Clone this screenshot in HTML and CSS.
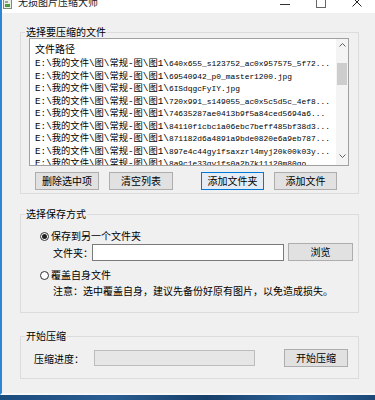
FILE: index.html
```html
<!DOCTYPE html>
<html lang="zh-CN">
<head>
  <meta charset="UTF-8">
  <title>无损图片压缩大师</title>
  <link rel="stylesheet" href="styles.css">
</head>
<body>

  <div class="window">
    <div class="titlebar">
      <svg class="app-icon" width="9" height="10" viewBox="0 0 9 10">
        <rect x="0.5" y="0.5" width="8" height="9" fill="#e8efe6" stroke="#7f8c7a"/>
        <rect x="2" y="5" width="5" height="3" fill="#4f9a3e"/>
        <rect x="2" y="2" width="3" height="2" fill="#9aa596"/>
      </svg>
      <span class="title">无损图片压缩大师</span>
      <div class="caption-btns">
        <span class="cap"><span class="cap-min"></span></span>
        <span class="cap"><span class="cap-max"></span></span>
        <span class="cap">
          <svg class="cap-close" width="10" height="10" viewBox="0 0 10 10">
            <path d="M0.5 0.5 L9.5 9.5 M9.5 0.5 L0.5 9.5" stroke="#222" stroke-width="1"/>
          </svg>
        </span>
      </div>
    </div>

    <div class="content">
      <fieldset class="group group-files">
        <legend>选择要压缩的文件</legend>
        <div class="listbox">
          <div class="list">
            <div class="list-head">文件路径</div>
            <div class="row"><span class="dir">E:\我的文件\图\常规-图\图1\</span><span class="name">640x655_s123752_ac0x957575_5f72...</span></div>
            <div class="row"><span class="dir">E:\我的文件\图\常规-图\图1\</span><span class="name">69540942_p0_master1200.jpg</span></div>
            <div class="row"><span class="dir">E:\我的文件\图\常规-图\图1\</span><span class="name">6ISdqgcFyIY.jpg</span></div>
            <div class="row"><span class="dir">E:\我的文件\图\常规-图\图1\</span><span class="name">720x991_s149055_ac0x5c5d5c_4ef8...</span></div>
            <div class="row"><span class="dir">E:\我的文件\图\常规-图\图1\</span><span class="name">74635287ae0413b9f5a84ced5694a6...</span></div>
            <div class="row"><span class="dir">E:\我的文件\图\常规-图\图1\</span><span class="name">84110f1cbc1a06ebc7beff485bf38d3...</span></div>
            <div class="row"><span class="dir">E:\我的文件\图\常规-图\图1\</span><span class="name">871182d6a4891a9bde0820e6a9eb787...</span></div>
            <div class="row"><span class="dir">E:\我的文件\图\常规-图\图1\</span><span class="name">897e4c44gy1fsaxzrl4myj20k00k03y...</span></div>
            <div class="row"><span class="dir">E:\我的文件\图\常规-图\图1\</span><span class="name">8a9c1e33gy1fs0a2b7k11j20m80go...</span></div>
          </div>
          <div class="scrollbar">
            <span class="arrow">
              <svg width="7" height="4" viewBox="0 0 7 4"><path d="M0.5 3.5 L3.5 0.5 L6.5 3.5" fill="none" stroke="#606060"/></svg>
            </span>
            <div class="track"><div class="thumb"></div></div>
            <span class="arrow arrow-down">
              <svg width="7" height="4" viewBox="0 0 7 4"><path d="M0.5 0.5 L3.5 3.5 L6.5 0.5" fill="none" stroke="#606060"/></svg>
            </span>
          </div>
        </div>
        <div class="btn-row">
          <button type="button" class="btn btn-del">删除选中项</button>
          <button type="button" class="btn btn-clear">清空列表</button>
          <button type="button" class="btn btn-folder focused">添加文件夹</button>
          <button type="button" class="btn btn-file">添加文件</button>
        </div>
      </fieldset>

      <fieldset class="group group-save">
        <legend>选择保存方式</legend>
        <div class="radio-row">
          <span class="radio checked"></span>
          <span>保存到另一个文件夹</span>
        </div>
        <div class="folder-row">
          <span class="folder-label">文件夹：</span>
          <input type="text" class="folder-input">
          <button type="button" class="btn btn-browse">浏览</button>
        </div>
        <div class="radio-row radio-row-2">
          <span class="radio"></span>
          <span>覆盖自身文件</span>
        </div>
        <div class="note">注意：选中覆盖自身，建议先备份好原有图片，以免造成损失。</div>
      </fieldset>

      <fieldset class="group group-start">
        <legend>开始压缩</legend>
        <div class="progress-row">
          <span class="progress-label">压缩进度：</span>
          <div class="progress"></div>
          <button type="button" class="btn btn-start">开始压缩</button>
        </div>
      </fieldset>
    </div>
  </div>
  <div class="desktop"></div>

</body>
</html>
```

FILE: styles.css
```css
body {
  margin: 0;
  font-family: "Noto Sans CJK SC", "Liberation Sans", sans-serif;
  font-size: 10px;
  color: #000;
  background: #1d4a78;
  overflow: hidden;
}

.window {
  height: 393px;
  background: #f0f0f0;
  border-left: 2px solid #2b86d6;
  border-bottom: 2px solid #f8f8f8;
  overflow: hidden;
}

/* title bar, cut at the top */
.titlebar {
  height: 13px;
  background: #fff;
  display: flex;
  align-items: flex-start;
  overflow: hidden;
}

.app-icon {
  margin: -1px 0 0 1px;
}

.title {
  margin: -4px 0 0 6px;
  font-size: 10px;
  line-height: 12px;
  color: #222;
}

.caption-btns {
  margin-left: auto;
  display: flex;
}

.cap {
  width: 36px;
  height: 13px;
  display: flex;
  justify-content: center;
  align-items: flex-start;
}

.cap-min {
  width: 10px;
  height: 1px;
  margin-top: 4px;
  background: #333;
}

.cap-max {
  width: 8px;
  height: 8px;
  margin-top: -2px;
  border: 1px solid #666;
}

.cap-close {
  margin-top: -3px;
}

/* group boxes */
.content {
  padding: 13px 0 0 18px;
}

.group {
  margin: 0;
  width: 339px;
  min-width: 0;
  box-sizing: border-box;
  border: 1px solid #dcdcdc;
}

.group legend {
  padding: 0 1px;
  line-height: 12px;
}

.group-files {
  padding: 0 0 3px 8px;
}

.group-files legend {
  margin-left: -4px;
}

.listbox {
  width: 320px;
  height: 128px;
  box-sizing: border-box;
  border: 1px solid #a0a0a0;
  background: #fff;
  display: flex;
}

.list {
  flex: 1;
  min-width: 0;
  overflow: hidden;
  padding-left: 5px;
}

.list-head {
  padding: 4px 0 3px;
  line-height: 12px;
}

.row {
  height: 12.5px;
  line-height: 12.5px;
  white-space: nowrap;
  color: #000;
  font-family: "Liberation Mono", "Noto Sans CJK SC", monospace;
}

.row .dir {
  font-size: 9.3px;
}

.row .name {
  font-size: 7.9px;
}

.scrollbar {
  width: 12px;
  background: #f4f4f4;
  display: flex;
  flex-direction: column;
}

.arrow {
  height: 12px;
  display: flex;
  align-items: center;
  justify-content: center;
}

.arrow-down {
  margin-bottom: 3px;
}

.track {
  flex: 1;
}

.thumb {
  margin: 12px 1px 0;
  height: 22px;
  background: #cdcdcd;
}

.btn-row {
  display: flex;
  margin-top: 6px;
}

.btn {
  height: 18px;
  padding: 0;
  border: 1px solid #adadad;
  background: #e1e1e1;
  font-family: inherit;
  font-size: 10px;
  line-height: 16px;
  color: #000;
  flex-shrink: 0;
}

.btn.focused {
  border-color: #0078d7;
  background: #e5ecf3;
}

.btn-del {
  width: 64px;
  margin-left: 6px;
}

.btn-clear {
  width: 64px;
  margin-left: 10px;
}

.btn-folder {
  width: 63px;
  margin-left: 28px;
}

.btn-file {
  width: 63px;
  margin-left: 10px;
}

/* save options */
.group-save {
  margin-top: 14px;
  padding: 0 0 14px 19px;
}

.group-save legend {
  margin-left: -15px;
}

.radio-row {
  display: flex;
  align-items: center;
  margin-top: 9px;
  height: 14px;
  line-height: 14px;
}

.radio-row-2 {
  margin-top: 7px;
}

.radio {
  width: 9px;
  height: 9px;
  box-sizing: border-box;
  border: 1px solid #333;
  border-radius: 50%;
  background: #fff;
  margin-right: 2px;
  display: flex;
  align-items: center;
  justify-content: center;
}

.radio.checked::after {
  content: "";
  width: 5px;
  height: 5px;
  border-radius: 50%;
  background: #222;
}

.folder-row {
  display: flex;
  align-items: center;
  height: 18px;
}

.folder-label {
  width: 39px;
  margin-left: 13px;
  white-space: nowrap;
  flex-shrink: 0;
}

.folder-input {
  width: 192px;
  height: 17px;
  box-sizing: border-box;
  margin: 0;
  border: 1px solid #7a7a7a;
  background: #fff;
  flex-shrink: 0;
}

.btn-browse {
  width: 65px;
  margin-left: 4px;
}

.note {
  margin: 2px 0 0 13px;
  line-height: 14px;
}

/* start */
.group-start {
  margin-top: 17px;
  padding: 0 0 11px 13px;
}

.group-start legend {
  margin-left: -9px;
}

.progress-row {
  display: flex;
  align-items: center;
  margin-top: 7px;
  height: 18px;
}

.progress-label {
  width: 60px;
  white-space: nowrap;
  flex-shrink: 0;
}

.progress {
  width: 161px;
  height: 16px;
  box-sizing: border-box;
  border: 1px solid #bcbcbc;
  background: #e6e6e6;
  flex-shrink: 0;
}

.btn-start {
  width: 64px;
  margin-left: 29px;
}

.desktop {
  height: 5px;
  background: linear-gradient(90deg, #1b4c7e, #2a5d92 30%, #173f69 55%, #2c6299 80%, #1c4877);
}
```
